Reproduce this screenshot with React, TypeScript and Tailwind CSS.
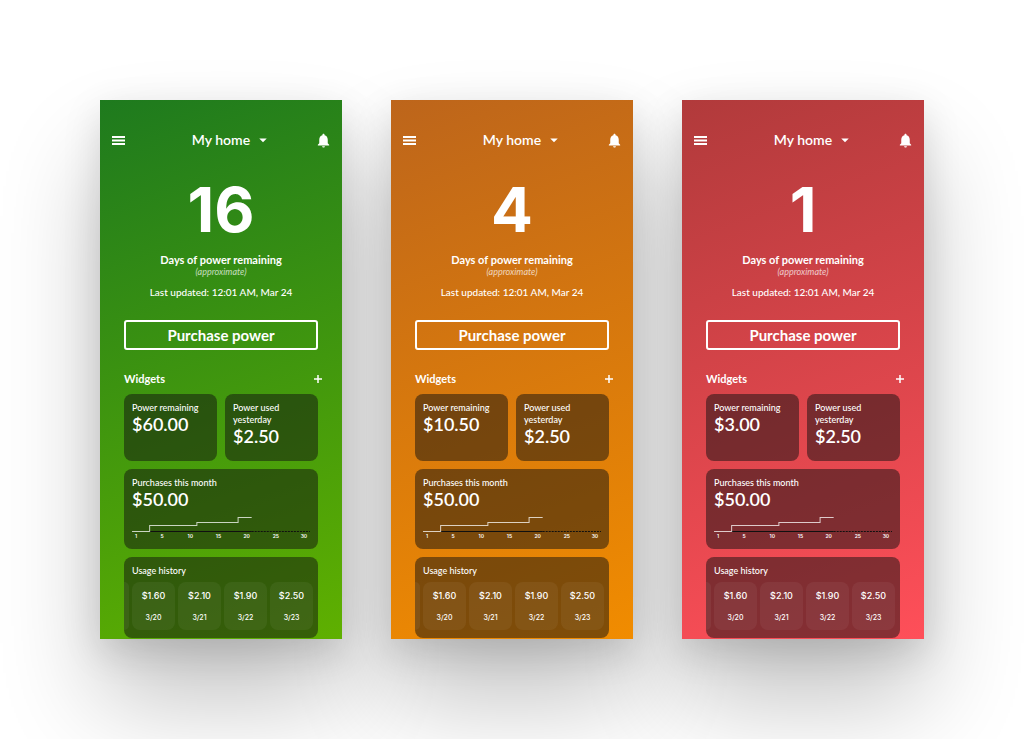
import { MdArrowDropDown, MdNotifications } from 'react-icons/md'

interface Meter {
  days: number
  remaining: string
  gradient: string
}

const meters: Meter[] = [
  { days: 16, remaining: '$60.00', gradient: 'bg-[linear-gradient(160deg,#1e7a1e,#5fb000)]' },
  { days: 4, remaining: '$10.50', gradient: 'bg-[linear-gradient(160deg,#bd651b,#f18c00)]' },
  { days: 1, remaining: '$3.00', gradient: 'bg-[linear-gradient(160deg,#b13a3b,#ff4f59)]' },
]

const history = [
  { amount: '$1.60', date: '3/20' },
  { amount: '$2.10', date: '3/21' },
  { amount: '$1.90', date: '3/22' },
  { amount: '$2.50', date: '3/23' },
]

const chartDays = [
  { label: '1', x: 4 },
  { label: '5', x: 30 },
  { label: '10', x: 58 },
  { label: '15', x: 86 },
  { label: '20', x: 114 },
  { label: '25', x: 143 },
  { label: '30', x: 171 },
]

function PurchaseChart() {
  return (
    <svg viewBox="0 0 177 24" className="block w-full font-['Inter',sans-serif]" role="img" aria-label="Purchases this month by day">
      <path d="M17 15.5H119" stroke="#101010" />
      <path d="M119 15.5H177" stroke="#101010" strokeDasharray="2 1" />
      <path d="M0 15.5H17.5V9.5H64.5V6.5H105.5V1.5H119" fill="none" stroke="#fff" strokeOpacity={0.75} />
      {chartDays.map(d => (
        <text key={d.label} x={d.x} y={22} textAnchor="middle" fontSize={5} fontWeight={600} fill="#fff">
          {d.label}
        </text>
      ))}
    </svg>
  )
}

function Phone({ days, remaining, gradient }: Meter) {
  return (
    <section
      className={`relative pb-px text-white before:absolute before:inset-0 before:-z-10 before:shadow-[0_12px_36px_rgba(0,0,0,0.13),0_60px_100px_rgba(0,0,0,0.24)] ${gradient}`}
    >
      {/* Top bar */}
      <header className="flex h-12 items-end justify-between px-3">
        <button aria-label="Menu" className="flex h-4 items-center">
          <svg viewBox="0 0 13 9" className="h-[9px] w-[13px]" stroke="#fff" strokeWidth={1.8}>
            <path d="M0 1H13M0 4.5H13M0 8H13" />
          </svg>
        </button>
        <button className="ml-6 flex h-4 items-center text-sm leading-4 font-semibold">
          My home
          <MdArrowDropDown className="ml-1 size-[18px]" />
        </button>
        <button aria-label="Notifications" className="-mr-0.5 flex h-4 items-center"><MdNotifications className="size-[17px]" /></button>
      </header>

      {/* Days left */}
      <div className="px-6 text-center">
        <p className="pt-[30px] font-['Inter',sans-serif] text-[62px] leading-16 font-bold">{days}</p>
        <p className="mt-3 text-[11px] leading-3 font-bold">Days of power remaining</p>
        <p className="text-[9px] leading-3 italic opacity-70">(approximate)</p>
        <p className="mt-2 text-[10px] leading-3 font-medium">Last updated: 12:01 AM, Mar 24</p>
        <button className="mt-[22px] h-[30px] w-full rounded-[3px] border-2 border-white text-[15px] leading-4 font-bold">
          Purchase power
        </button>
      </div>

      {/* Widgets */}
      <div className="px-6">
        <div className="mt-[21px] flex h-4 items-center justify-between">
          <h2 className="text-[11px] leading-4 font-bold">Widgets</h2>
          <button aria-label="Add widget" className="-mr-1">
            <svg viewBox="0 0 8 8" className="size-2" stroke="#fff" strokeWidth={1.5}>
              <path d="M4 0V8M0 4H8" />
            </svg>
          </button>
        </div>

        <div className="mt-[7px] grid grid-cols-2 gap-2">
          <div className="h-[67px] rounded-lg bg-[#101010]/50 px-2 pt-2">
            <h3 className="text-[9px] leading-3 font-medium">Power remaining</h3>
            <p className="text-lg leading-5 font-semibold">{remaining}</p>
          </div>
          <div className="h-[67px] rounded-lg bg-[#101010]/50 px-2 pt-2">
            <h3 className="text-[9px] leading-3 font-medium">Power used yesterday</h3>
            <p className="text-lg leading-5 font-semibold">$2.50</p>
          </div>
        </div>

        <div className="mt-2 rounded-lg bg-[#101010]/50 px-2 pt-2 pb-[9px]">
          <h3 className="text-[9px] leading-3 font-medium">Purchases this month</h3>
          <p className="text-lg leading-5 font-semibold">$50.00</p>
          <div className="mt-[7px]"><PurchaseChart /></div>
        </div>

        <div className="mt-2 overflow-hidden rounded-lg bg-[#101010]/50 pt-2 pb-2">
          <h3 className="px-2 text-[9px] leading-3 font-medium">Usage history</h3>
          <div className="mt-[5px] flex gap-[3px] pr-[5px]">
            <div className="w-[5px] rounded-r-md bg-white/5" />
            {history.map(h => (
              <div key={h.date} className="h-12 flex-1 rounded-lg bg-white/5 pt-2 text-center font-['Inter',sans-serif]">
                <p className="text-[9px] leading-3 font-medium">{h.amount}</p>
                <p className="mt-[10px] text-[7px] leading-3 font-medium">{h.date}</p>
              </div>
            ))}
          </div>
        </div>
      </div>
    </section>
  )
}

export default function App() {
  return (
    <main className="isolate grid min-h-screen grid-cols-3 items-start gap-[49px] overflow-hidden bg-white p-[100px] font-['Lato',sans-serif]">
      {meters.map(m => <Phone key={m.days} {...m} />)}
    </main>
  )
}
